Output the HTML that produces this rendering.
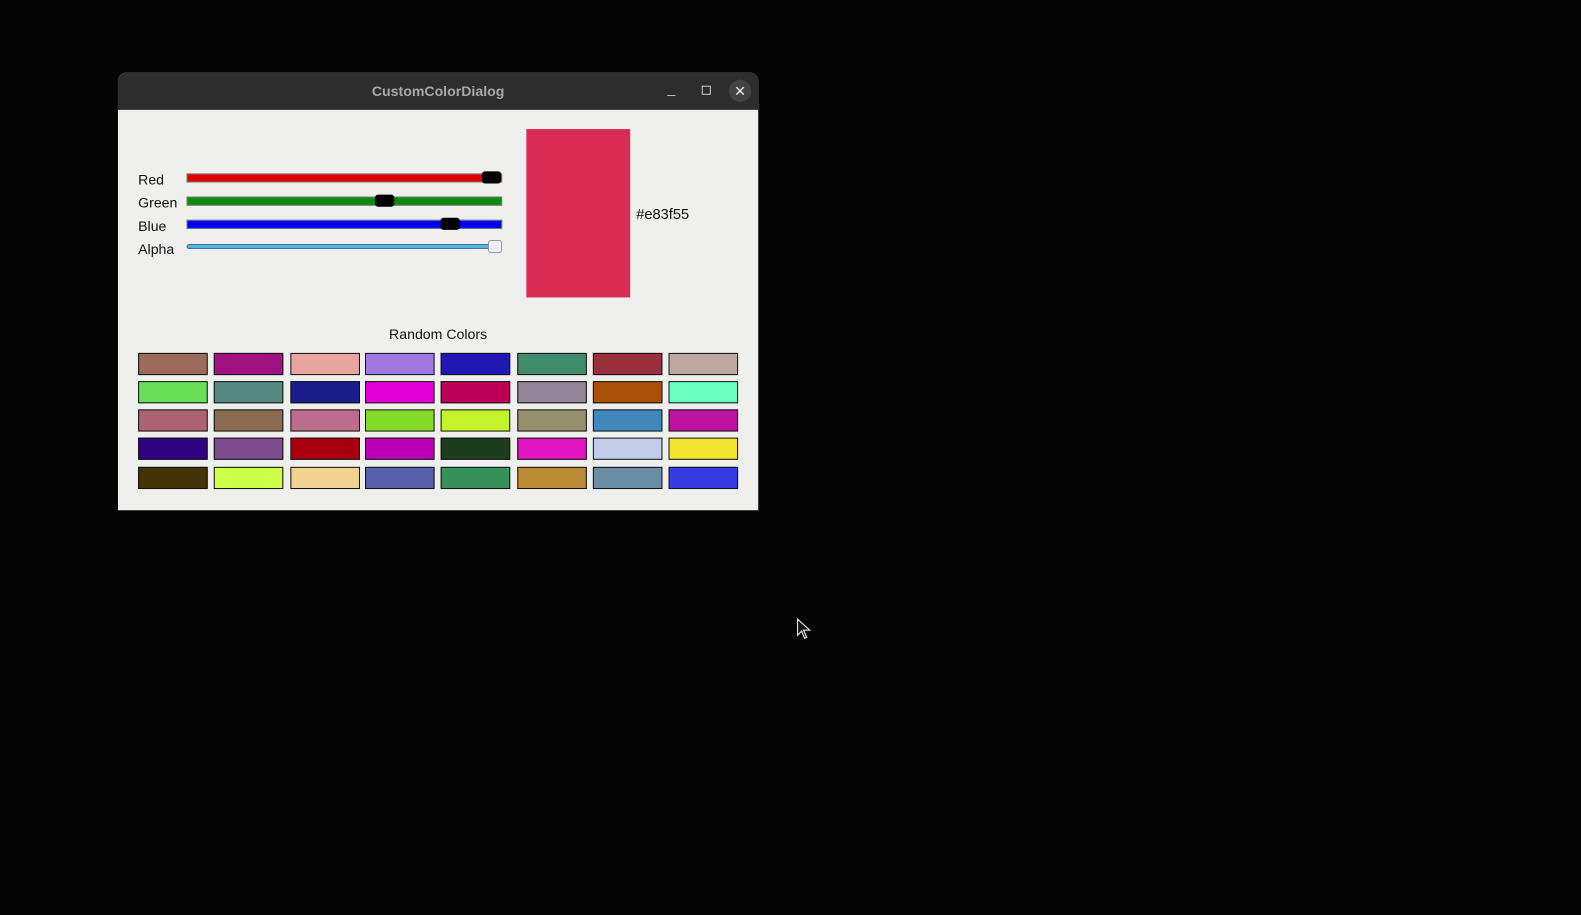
<!DOCTYPE html>
<html><head><style>
*{margin:0;padding:0;box-sizing:border-box}
body{width:1581px;height:915px;background:#050505;position:relative;overflow:hidden;font-family:"Liberation Sans","DejaVu Sans",sans-serif}
#root{position:absolute;left:0;top:0;width:1568px;height:907px;transform:scale(1.0083);transform-origin:0 0}
.win{position:absolute;left:117px;top:72px;width:635px;height:434px;background:#efefed;border-radius:8px 8px 0 0}
.tb{position:absolute;left:0;top:0;width:635px;height:37px;background:#2d2d2d;border-radius:8px 8px 0 0;color:#a8a8a8;font-weight:bold;font-size:14px;text-align:center;line-height:37px}
.lbl{position:absolute;left:20px;font-size:14px;color:#111}
.sl{position:absolute;left:68px;width:313px;height:9px;border:1px solid #777}
.th{position:absolute;width:19px;height:12px;background:#000;border-radius:3px}
.sw{position:absolute;width:69px;height:22px;border:1.5px solid #111}
</style></head><body>
<div id="root">
<div class="win">
<div class="tb">CustomColorDialog
<span style="position:absolute;left:545px;top:-3px;color:#ccc;font-weight:normal">_</span>
<span style="position:absolute;left:579px;top:13px;width:9px;height:9px;border:1px solid #ccc"></span>
<span style="position:absolute;left:606px;top:7px;width:22px;height:22px;border-radius:50%;background:#444;color:#eee;line-height:22px;font-size:14px;font-weight:normal">✕</span>
</div>
<div class="lbl" style="top:98px">Red</div>
<div class="lbl" style="top:121px">Green</div>
<div class="lbl" style="top:144px">Blue</div>
<div class="lbl" style="top:167px">Alpha</div>
<div class="sl" style="top:100px;background:#e00000"></div>
<div class="th" style="left:361px;top:98px"></div>
<div class="sl" style="top:123px;background:#0a8c0a"></div>
<div class="th" style="left:255px;top:121px"></div>
<div class="sl" style="top:146px;background:#0000f0"></div>
<div class="th" style="left:320px;top:144px"></div>
<div class="sl" style="top:170px;height:5px;background:#5ab0de;border-color:#3a7aa0;border-radius:3px"></div>
<div style="position:absolute;left:367px;top:166px;width:14px;height:13px;background:#eceef8;border:1px solid #999;border-radius:3px"></div>
<div style="position:absolute;left:405px;top:56px;width:103px;height:167px;background:#d82c55"></div>
<div style="position:absolute;left:514px;top:133px;font-size:14.5px;color:#111">#e83f55</div>
<div style="position:absolute;left:0;width:635px;top:251px;text-align:center;font-size:14px;color:#111">Random Colors</div>
<div id="g"></div>
</div>
<svg style="position:absolute;left:790px;top:613px" width="16" height="22" viewBox="0 0 16 22"><path d="M1 1 L1 17 L5 13 L8 20 L10 19 L7 12 L13 12 Z" fill="#111" stroke="#ddd" stroke-width="1.2"/></svg>
</div>
<script>
var c=[["#9c6b5b","#a01280","#e8a5a0","#a077e0","#2018b0","#428c6e","#9a303c","#bca8a0"],
["#6ade58","#548a80","#1a1c8c","#e000d8","#bc0058","#948498","#a85208","#6affc0"],
["#ac6474","#8c6c50","#bc6c8c","#84da28","#c4f22c","#968e6c","#4088bc","#bc14a0"],
["#300480","#7c4c8c","#a80010","#bc00b8","#1e3c1e","#e014c0","#c0cce8","#f0e430"],
["#443408","#ccff48","#f2d290","#5860ac","#38905a","#bc8a34","#6a8ca4","#363ce0"]];
var xs=[20,95,171,245,320,396,471,546],ys=[278,306,334,362,391],h="";
for(var r=0;r<5;r++)for(var i=0;i<8;i++)h+='<div class="sw" style="left:'+xs[i]+'px;top:'+ys[r]+'px;background:'+c[r][i]+'"></div>';
document.getElementById("g").outerHTML=h;
</script>
</body></html>
